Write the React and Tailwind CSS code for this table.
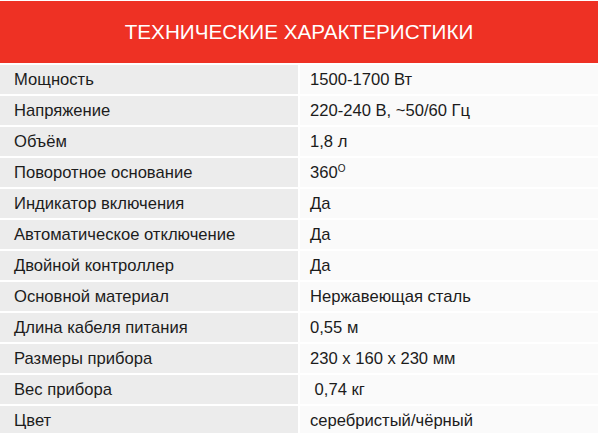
import React from "react";

const SPECS = [
  ["Мощность", "1500-1700 Вт"],
  ["Напряжение", "220-240 В, ~50/60 Гц"],
  ["Объём", "1,8 л"],
  ["Поворотное основание", "360"],
  ["Индикатор включения", "Да"],
  ["Автоматическое отключение", "Да"],
  ["Двойной контроллер", "Да"],
  ["Основной материал", "Нержавеющая сталь"],
  ["Длина кабеля питания", "0,55 м"],
  ["Размеры прибора", "230 x 160 x 230 мм"],
  ["Вес прибора", "\u00a00,74 кг"],
  ["Цвет", "серебристый/чёрный"],
];

export default function App() {
  return (
    <div
      className="w-[600px] h-[433px] overflow-hidden bg-white pt-[1px] pr-[2px]"
      style={{ fontFamily: '"Liberation Sans", Arial, sans-serif' }}
    >
      <div className="h-[62px] bg-[#ee3124] flex items-center justify-center text-white text-[20.7px]">
        ТЕХНИЧЕСКИЕ ХАРАКТЕРИСТИКИ
      </div>
      <div className="grid grid-cols-[298px_1fr] gap-[2px] mt-[2px] text-[16.6px] text-[#1c1c1c]">
        {SPECS.map(([k, v]) => (
          <React.Fragment key={k}>
            <div className="h-[29px] bg-[#ececec] flex items-center pl-[14px] pt-[1px]">{k}</div>
            <div className="h-[29px] bg-[#fafafa] flex items-center pl-[10px] pt-[2px]">
              {v}
              {v === "360" && <sup className="text-[10px] -top-[5px]">O</sup>}
            </div>
          </React.Fragment>
        ))}
      </div>
    </div>
  );
}
